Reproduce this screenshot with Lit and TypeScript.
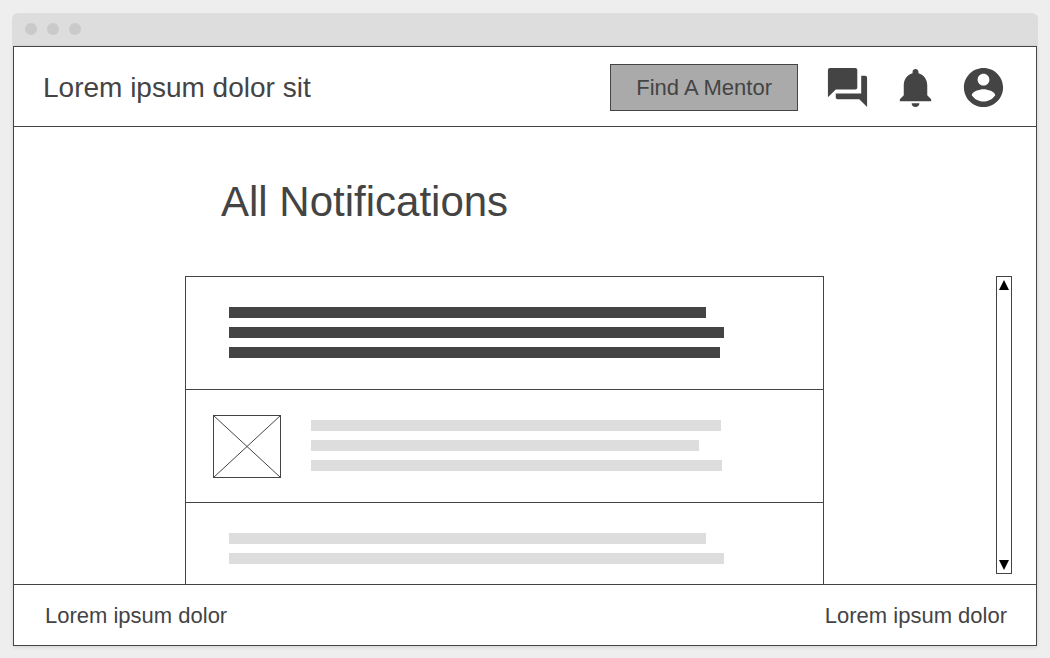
import { LitElement, html, css } from "lit";
import { customElement } from "lit/decorators.js";
import { classMap } from "lit/directives/class-map.js";
import { styleMap } from "lit/directives/style-map.js";

interface Notification {
  unread: boolean;
  picture: boolean;
  lines: number[];
}

const NOTIFICATIONS: Notification[] = [
  { unread: true, picture: false, lines: [96.4, 100, 99.2] },
  { unread: false, picture: true, lines: [99.3, 94, 99.6] },
  { unread: false, picture: false, lines: [96.4, 100] },
];

@customElement("notification-row")
class NotificationRow extends LitElement {
  static properties = { item: { attribute: false } };
  declare item: Notification;

  static styles = css`
    :host {
      display: block;
    }
    .row {
      display: flex;
      box-sizing: border-box;
      min-height: 112px;
      padding: 30px 99px 20px 43px;
    }
    .row.with-picture {
      padding-left: 27px;
      gap: 30px;
    }
    .picture {
      flex: none;
      width: 68px;
      height: 63px;
      margin: -5px 0;
    }
    .lines {
      flex: 1;
      display: flex;
      flex-direction: column;
      gap: 9px;
    }
    .line {
      height: 11px;
      background: #ddd;
    }
    .unread .line {
      background: #444;
    }
  `;

  render() {
    const { unread, picture, lines } = this.item;
    return html`
      <div class=${classMap({ row: true, unread, "with-picture": picture })}>
        ${picture
          ? html`<svg class="picture" viewBox="0 0 68 63" fill="none" stroke="#444" aria-hidden="true">
              <rect x="0.5" y="0.5" width="67" height="62" />
              <path d="M.5 .5l67 62M67.5 .5l-67 62" />
            </svg>`
          : null}
        <div class="lines">
          ${lines.map((w) => html`<div class="line" style=${styleMap({ width: `${w}%` })}></div>`)}
        </div>
      </div>
    `;
  }
}

@customElement("app-root")
class AppRoot extends LitElement {
  static styles = css`
    :host {
      display: flex;
      flex-direction: column;
      box-sizing: border-box;
      height: 100vh;
      padding: 13px 12px 12px;
      background: #eee;
      color: #444;
      font-family: "Liberation Sans", Arial, sans-serif;
    }
    .titlebar {
      flex: none;
      display: flex;
      align-items: flex-start;
      gap: 10px;
      padding: 10px 13px 11px;
      background: #ddd;
      border-radius: 6px 6px 0 0;
    }
    .dot {
      width: 12px;
      height: 12px;
      border-radius: 50%;
      background: #cacaca;
    }
    .window {
      flex: 1;
      min-height: 0;
      display: flex;
      flex-direction: column;
      margin: 0 1px;
      border: 1px solid #444;
      background: #fff;
      box-shadow: 0 1px 4px rgba(0, 0, 0, 0.12);
    }
    .header {
      display: flex;
      align-items: center;
      justify-content: space-between;
      padding: 17px 29px 15px;
      border-bottom: 1px solid #444;
    }
    .brand {
      color: inherit;
      text-decoration: none;
      font-size: 28px;
      line-height: 30px;
    }
    .actions {
      display: flex;
      align-items: center;
      gap: 26px;
    }
    .icons {
      display: flex;
      gap: 21px;
    }
    button {
      margin: 0;
      padding: 0;
      border: 0;
      background: none;
      color: inherit;
      font: inherit;
      cursor: pointer;
    }
    .mentor {
      padding: 10px 25px;
      border: 1px solid #444;
      background: #aaa;
      font-size: 22px;
      line-height: 25px;
    }
    .icon {
      display: block;
      width: 47px;
      height: 47px;
      fill: #444;
    }
    .main {
      flex: 1;
      min-height: 0;
      display: flex;
      flex-direction: column;
    }
    .title {
      margin: 0;
      padding: 50px 207px;
      font-size: 42px;
      font-weight: 400;
      line-height: 49px;
      font-variant-ligatures: none;
    }
    .content {
      flex: 1;
      min-height: 0;
      display: grid;
      grid-template-columns: minmax(0, 1fr) 16px;
      grid-template-rows: minmax(0, 1fr);
      gap: 172px;
      padding: 0 24px 0 171px;
    }
    .list {
      margin: 0;
      padding: 0;
      list-style: none;
      overflow: hidden;
      border: 1px solid #444;
      border-bottom: 0;
    }
    .item + .item {
      border-top: 1px solid #444;
    }
    .scrollbar {
      display: flex;
      flex-direction: column;
      justify-content: space-between;
      align-items: center;
      margin-bottom: 10px;
      padding: 3px 0;
      border: 1px solid #444;
    }
    .arrow {
      display: block;
      width: 10px;
      height: 10px;
      fill: #000;
    }
    .footer {
      display: flex;
      justify-content: space-between;
      padding: 18px 29px 17px 31px;
      border-top: 1px solid #444;
      font-size: 22px;
      line-height: 25px;
    }
  `;

  render() {
    return html`
      <div class="titlebar">
        <span class="dot"></span><span class="dot"></span><span class="dot"></span>
      </div>
      <div class="window">
        <header class="header">
          <a class="brand" href="#">Lorem ipsum dolor sit</a>
          <div class="actions">
            <button class="mentor" type="button">Find A Mentor</button>
            <div class="icons">
              <button type="button" aria-label="Messages">
                <svg class="icon" viewBox="0 0 24 24">
                  <path d="M21 6h-2v9H6v2c0 .55.45 1 1 1h11l4 4V7c0-.55-.45-1-1-1zm-4 6V3c0-.55-.45-1-1-1H3c-.55 0-1 .45-1 1v14l4-4h10c.55 0 1-.45 1-1z" />
                </svg>
              </button>
              <button type="button" aria-label="Notifications">
                <svg class="icon" viewBox="0 0 24 24">
                  <path d="M12 22c1.1 0 2-.9 2-2h-4c0 1.1.89 2 2 2zm6-6v-5c0-3.07-1.64-5.64-4.5-6.32V4c0-.83-.67-1.5-1.5-1.5s-1.5.67-1.5 1.5v.68C7.63 5.36 6 7.92 6 11v5l-2 2v1h16v-1l-2-2z" />
                </svg>
              </button>
              <button type="button" aria-label="Account">
                <svg class="icon" viewBox="0 0 24 24">
                  <path d="M12 2C6.48 2 2 6.48 2 12s4.48 10 10 10 10-4.48 10-10S17.52 2 12 2zm0 3c1.66 0 3 1.34 3 3s-1.34 3-3 3-3-1.34-3-3 1.34-3 3-3zm0 14.2c-2.5 0-4.71-1.28-6-3.22.03-1.99 4-3.08 6-3.08 1.99 0 5.97 1.09 6 3.08-1.29 1.94-3.5 3.22-6 3.22z" />
                </svg>
              </button>
            </div>
          </div>
        </header>
        <main class="main">
          <h1 class="title">All Notifications</h1>
          <div class="content">
            <ul class="list">
              ${NOTIFICATIONS.map(
                (item) => html`<li class="item"><notification-row .item=${item}></notification-row></li>`
              )}
            </ul>
            <div class="scrollbar">
              <button type="button" aria-label="Scroll up">
                <svg class="arrow" viewBox="0 0 10 10"><path d="M5 0l5 10H0z" /></svg>
              </button>
              <button type="button" aria-label="Scroll down">
                <svg class="arrow" viewBox="0 0 10 10"><path d="M0 0h10L5 10z" /></svg>
              </button>
            </div>
          </div>
        </main>
        <footer class="footer">
          <span>Lorem ipsum dolor</span>
          <span>Lorem ipsum dolor</span>
        </footer>
      </div>
    `;
  }
}
